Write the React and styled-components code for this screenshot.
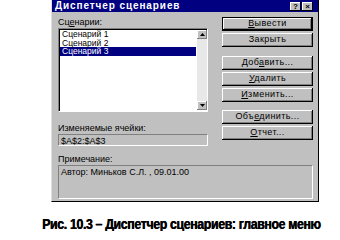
import React from 'react'
import styled, { createGlobalStyle } from 'styled-components'

const Global = createGlobalStyle`
  html, body { margin: 0; padding: 0; background: #fff; }
  body { width: 340px; height: 240px; overflow: hidden; }
`

const Page = styled.div`
  width: 340px;
  height: 240px;
  overflow: hidden;
  background: #fff;
  font-family: "Liberation Sans", Arial, sans-serif;
`

const Dialog = styled.div`
  margin-left: 51px;
  width: 268px;
  height: 202px;
  box-sizing: border-box;
  background: #c0c0c0;
  border-left: 1px solid #dfdfdf;
  border-right: 1px solid #000;
  border-bottom: 1px solid #000;
  display: flex;
  flex-direction: column;
`

const TitleBar = styled.div`
  height: 12px;
  background: #000080;
  display: flex;
  align-items: center;
  padding: 0 5px 0 3px;
`

const Title = styled.div`
  flex: 1;
  color: #fff;
  font-weight: bold;
  font-size: 10px;
  letter-spacing: 0.9px;
  line-height: 12px;
`

const TitleButton = styled.div`
  width: 11px;
  height: 9px;
  margin-left: 1px;
  box-sizing: border-box;
  background: #c0c0c0;
  box-shadow: inset -1px -1px #000, inset 1px 1px #fff;
  font-size: 8px;
  font-weight: bold;
  line-height: 9px;
  text-align: center;
  color: #000;
`

const Body = styled.div`
  flex: 1;
  display: grid;
  grid-template-columns: 150px 91px;
  column-gap: 14px;
  padding: 5px 5px 0 6px;
`

const Column = styled.div`
  display: flex;
  flex-direction: column;
`

const Label = styled.div`
  font-size: 9px;
  line-height: 10px;
  height: 10px;
  margin-top: ${({ mt }) => mt || 0}px;
  color: #000;
  white-space: nowrap;
`

const List = styled.div`
  margin-top: 1px;
  height: 84px;
  box-sizing: border-box;
  display: flex;
  background: #fff;
  border-top: 1px solid #808080;
  border-left: 1px solid #808080;
  border-right: 1px solid #fff;
  border-bottom: 1px solid #fff;
  box-shadow: inset 1px 1px #000;
`

const Items = styled.div`
  flex: 1;
  padding: 1px 0 0 1px;
`

const Item = styled.div`
  height: 8.5px;
  font-size: 8.5px;
  line-height: 8.5px;
  padding-left: 2px;
  margin-right: 1px;
  white-space: nowrap;
  background: ${({ selected }) => (selected ? '#000080' : 'transparent')};
  color: ${({ selected }) => (selected ? '#fff' : '#000')};
`

const ScrollBar = styled.div`
  width: 10px;
  display: flex;
  flex-direction: column;
  justify-content: space-between;
  background: #e8e8e8;
  margin: 1px 0 1px 0;
`

const Arrow = styled.div`
  height: 9px;
  box-sizing: border-box;
  background: #c0c0c0;
  box-shadow: inset -1px -1px #808080, inset 1px 1px #fff;
  display: flex;
  align-items: center;
  justify-content: center;
`

const Field = styled.div`
  height: ${({ h }) => h}px;
  margin-top: 1px;
  box-sizing: border-box;
  background: #c0c0c0;
  border-top: 1px solid #808080;
  border-left: 1px solid #808080;
  border-right: 1px solid #fff;
  border-bottom: 1px solid #fff;
  font-size: 9px;
  line-height: 10px;
  padding: 1px 2px;
  color: #000;
  white-space: nowrap;
`

const Note = styled.div`
  grid-column: 1 / span 2;
  display: flex;
  flex-direction: column;
`

const Group = styled.div`
  display: flex;
  flex-direction: column;
  gap: 2px;
  margin-top: ${({ mt }) => mt || 0}px;
`

const Button = styled.div`
  height: 14px;
  box-sizing: border-box;
  background: #c0c0c0;
  font-size: 9px;
  letter-spacing: 0.4px;
  line-height: 13px;
  text-align: center;
  color: #000;
  box-shadow: ${({ primary }) =>
    primary
      ? 'inset -1px -1px #000, inset 1px 1px #000, inset -2px -2px #000, inset 2px 2px #fff, inset -3px -3px #808080'
      : 'inset -1px -1px #000, inset 1px 1px #fff, inset -2px -2px #808080'};
`

const Key = styled.span`
  text-decoration: underline;
`

const Caption = styled.div`
  margin-top: 15px;
  width: 340px;
  box-sizing: border-box;
  overflow: hidden;
  padding-left: 42px;
  font-weight: bold;
  font-size: 14px;
  line-height: 14px;
  white-space: nowrap;
  color: #000;
  letter-spacing: -0.4px;
  text-shadow: 0.5px 0 0 #000;
`

const Squeeze = styled.span`
  display: inline-block;
  transform: scaleX(0.88);
  transform-origin: left center;
`

const ArrowIcon = ({ down }) => (
  <svg width="5" height="3" viewBox="0 0 5 3">
    <path d={down ? 'M0 0h5L2.5 3z' : 'M0 3h5L2.5 0z'} fill="#000" />
  </svg>
)

export default function App() {
  return (
    <Page>
      <Global />
      <Dialog>
        <TitleBar>
          <Title>Диспетчер сценариев</Title>
          <TitleButton>?</TitleButton>
          <TitleButton>×</TitleButton>
        </TitleBar>
        <Body>
          <Column>
            <Label>Сц<Key>е</Key>нарии:</Label>
            <List>
              <Items>
                <Item>Сценарий 1</Item>
                <Item>Сценарий 2</Item>
                <Item selected>Сценарий 3</Item>
              </Items>
              <ScrollBar>
                <Arrow><ArrowIcon /></Arrow>
                <Arrow><ArrowIcon down /></Arrow>
              </ScrollBar>
            </List>
            <Label mt={11}>Изменяемые ячейки:</Label>
            <Field h={12}>$A$2:$A$3</Field>
          </Column>
          <Column>
            <Group>
              <Button primary><Key>В</Key>ывести</Button>
              <Button>Закрыть</Button>
            </Group>
            <Group mt={9}>
              <Button>Доб<Key>а</Key>вить...</Button>
              <Button><Key>У</Key>далить</Button>
              <Button><Key>И</Key>зменить...</Button>
            </Group>
            <Group mt={8}>
              <Button>Объ<Key>е</Key>динить...</Button>
              <Button><Key>О</Key>тчет...</Button>
            </Group>
          </Column>
          <Note>
            <Label mt={5}>Примечание:</Label>
            <Field h={34}>Автор: Миньков С.Л. , 09.01.00</Field>
          </Note>
        </Body>
      </Dialog>
      <Caption>
        <Squeeze>Рис. 10.3 – Диспетчер сценариев: главное меню</Squeeze>
      </Caption>
    </Page>
  )
}
